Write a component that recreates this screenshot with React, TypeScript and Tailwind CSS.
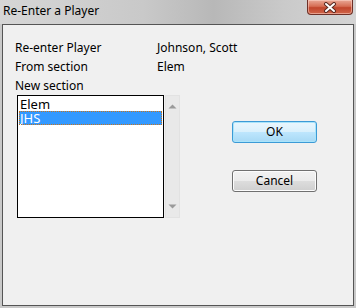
const font = { fontFamily: '"Noto Sans", "DejaVu Sans", sans-serif' };

const CloseIcon = () => (
  <svg width="14" height="11" viewBox="0 0 14 11">
    <path d="M3 2 L11 9 M11 2 L3 9" stroke="#5a2a22" strokeWidth="4" strokeLinecap="round" />
    <path d="M3 2 L11 9 M11 2 L3 9" stroke="#ffffff" strokeWidth="2" strokeLinecap="round" />
  </svg>
);

const Arrow = ({ up }: { up?: boolean }) => (
  <svg width="9" height="5" viewBox="0 0 9 5">
    <path d={up ? "M0.5 4.5 L4.5 0.5 L8.5 4.5 Z" : "M0.5 0.5 L4.5 4.5 L8.5 0.5 Z"} fill="#9a9a9a" />
  </svg>
);

const App = () => {
  const sections = ["Elem", "JHS"];
  const selected = 1;

  return (
    <div
      className="w-[356px] h-[308px] flex flex-col bg-[#c9c9c9] overflow-hidden"
      style={font}
    >
      {/* title bar */}
      <div className="h-[24px] flex items-start justify-between bg-[linear-gradient(90deg,#d6d6d6_0%,#c9c9c9_40%,#b8b8b8_60%,#cacaca_80%,#d4d4d4_100%)]">
        <span className="pl-[3px] pt-[3px] text-[12px] leading-[15px] text-black">Re-Enter a Player</span>
        <div className="mr-[3px] w-[46px] h-[15px] flex items-center justify-center rounded-b-[4px] border border-t-0 border-[#6e3027] bg-[linear-gradient(180deg,#e9a896_0%,#d66e55_45%,#c1452c_55%,#d0664a_100%)] shadow-[inset_0_0_0_1px_rgba(255,220,210,0.5)]">
          <CloseIcon />
        </div>
      </div>

      {/* client area */}
      <div className="flex-1 mx-[2px] mb-[2px] border border-[#555555] bg-[#f0f0f0] text-[12px] text-black">
        <div className="pl-[12px] pt-[13px]">
          <div className="h-[19px] flex items-center">
            <span className="w-[142px]">Re-enter Player</span>
            <span>Johnson, Scott</span>
          </div>
          <div className="h-[19px] flex items-center">
            <span className="w-[142px]">From section</span>
            <span>Elem</span>
          </div>
          <div className="h-[19px] flex items-center">New section</div>
        </div>

        <div className="flex pl-[14px]">
          <div className="w-[147px] h-[123px] border border-black bg-white text-[13px] leading-[14px] p-[1px]">
            {sections.map((s, i) => (
              <div
                key={s}
                className={
                  i === selected
                    ? "h-[14px] bg-[#3399ff] text-white outline-1 outline-dotted outline-[#c8741c] -outline-offset-1 pl-[1px]"
                    : "h-[14px] pl-[1px]"
                }
              >
                {s}
              </div>
            ))}
          </div>
          <div className="ml-[1px] w-[15px] h-[123px] bg-[#e9e9e9] border border-[#e2e2e2] flex flex-col items-center justify-between py-[8px]">
            <Arrow up />
            <Arrow />
          </div>

          <div className="ml-[52px] pt-[26px] flex flex-col gap-[27px]">
            <button className="w-[85px] h-[22px] rounded-[3px] border border-[#3c9ad6] bg-[linear-gradient(180deg,#eaf6fd_0%,#d9f0fc_50%,#bee6fd_50%,#a7d9f5_100%)] shadow-[inset_0_0_0_1px_#a9e4fa] text-[12px] text-black">
              OK
            </button>
            <button className="w-[85px] h-[22px] rounded-[3px] border border-[#707070] bg-[linear-gradient(180deg,#f2f2f2_0%,#ebebeb_50%,#dddddd_50%,#cfcfcf_100%)] shadow-[inset_0_0_0_1px_#fcfcfc] text-[12px] text-black">
              Cancel
            </button>
          </div>
        </div>
      </div>
    </div>
  );
};

export default App;
